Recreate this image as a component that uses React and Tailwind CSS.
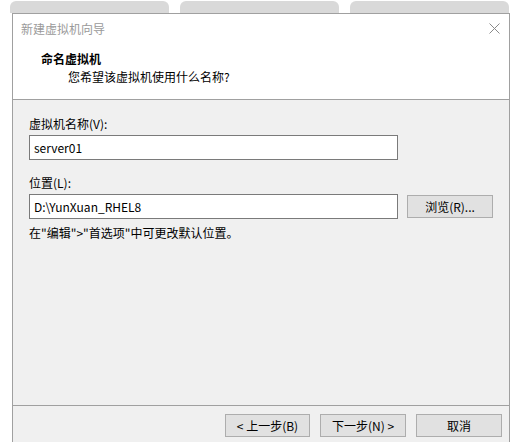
import React from "react";

const font = {
  fontFamily:
    '"Microsoft YaHei", "Noto Sans CJK SC", "Noto Sans", sans-serif',
};

function CloseIcon() {
  return (
    <svg width="11" height="11" viewBox="0 0 11 11" className="block">
      <path d="M0.5 0.5 L10.5 10.5 M10.5 0.5 L0.5 10.5" stroke="#8a8a8a" strokeWidth="1" fill="none" />
    </svg>
  );
}

function Field({ value }) {
  return (
    <div className="w-[369px] h-[25px] bg-white border border-[#7a7a7a] flex items-center px-[4px] text-[12px] text-black">
      {value}
    </div>
  );
}

function Button({ children, className = "" }) {
  return (
    <div
      className={
        "h-[23px] bg-[#e1e1e1] border border-[#adadad] flex items-center justify-center text-[12px] text-black " +
        className
      }
    >
      {children}
    </div>
  );
}

export default function App() {
  return (
    <div className="w-[523px] h-[442px] bg-white overflow-hidden" style={font}>
      {/* background tabs */}
      <div className="flex gap-[11px] pl-[10px] pt-[1px] h-[13px]">
        <div className="w-[159px] h-[12px] rounded-t-[6px] bg-[#d9d9d9]" />
        <div className="w-[159px] h-[12px] rounded-t-[6px] bg-[#d9d9d9]" />
        <div className="w-[159px] h-[12px] rounded-t-[6px] bg-[#d9d9d9]" />
      </div>

      {/* wizard window */}
      <div className="ml-[12px] w-[498px] h-[429px] border-t border-l border-r border-[#a0a0a0] flex flex-col">
        <div className="bg-white h-[86px] border-b border-[#a0a0a0] flex flex-col">
          <div className="h-[29px] flex items-center justify-between pl-[8px] pr-[9px]">
            <span className="text-[12px] text-[#9a9a9a]">新建虚拟机向导</span>
            <CloseIcon />
          </div>
          <div className="pl-[28px] pt-[8px] text-[12px] font-bold text-black leading-[16px]">
            命名虚拟机
          </div>
          <div className="pl-[55px] pt-[2px] text-[12px] text-black leading-[16px]">
            您希望该虚拟机使用什么名称?
          </div>
        </div>

        <div className="flex-1 bg-[#f0f0f0] flex flex-col">
          <div className="flex-1 pl-[16px] pt-[16px] flex flex-col">
            <div className="text-[12px] leading-[16px] text-black">虚拟机名称(V):</div>
            <div className="mt-[3px]">
              <Field value="server01" />
            </div>
            <div className="mt-[15px] text-[12px] leading-[16px] text-black">位置(L):</div>
            <div className="mt-[3px] flex items-center gap-[9px]">
              <Field value="D:\YunXuan_RHEL8" />
              <Button className="w-[86px]">浏览(R)...</Button>
            </div>
            <div className="mt-[6px] text-[12px] leading-[16px] text-black">
              在"编辑"&gt;"首选项"中可更改默认位置。
            </div>
          </div>
          <div className="border-t border-[#a0a0a0] h-[37px] flex items-start justify-end gap-[10px] pr-[7px] pt-[8px]">
            <Button className="w-[85px]">&lt; 上一步(B)</Button>
            <Button className="w-[86px]">下一步(N) &gt;</Button>
            <Button className="w-[86px]">取消</Button>
          </div>
        </div>
      </div>
    </div>
  );
}
